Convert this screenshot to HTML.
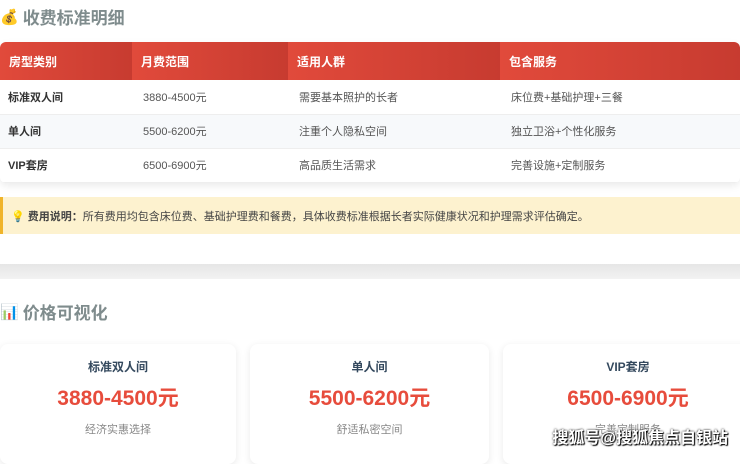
<!DOCTYPE html><html><head><meta charset="utf-8"><style>
*{margin:0;padding:0;box-sizing:border-box}
body{width:740px;height:452px;overflow:hidden;background:#fff;font-family:"Liberation Sans","Noto Sans CJK SC",sans-serif;position:relative}
.t{position:absolute;left:0;font-size:17px;font-weight:bold;color:#7f8c8d;display:flex;align-items:center;gap:4px}
table{position:absolute;top:42px;left:0;width:740px;border-collapse:collapse;box-shadow:0 3px 8px rgba(0,0,0,.08);border-radius:6px;overflow:hidden}
th{height:38px;text-align:left;padding-left:9px;color:#fff;font-size:12px;background:linear-gradient(90deg,#e14a3b,#c73b30)}
td{height:34px;padding-left:11px;font-size:11px;color:#555;border-bottom:1px solid #eee}
td:first-child{font-weight:bold;color:#333;padding-left:8px}
tr.a td{background:#f7f9fb}
.note{position:absolute;top:197px;left:0;width:740px;height:37px;background:#fdf2cf;border-left:3px solid #f0b429;font-size:11px;color:#444;padding:11px 0 0 8px}
.band{position:absolute;top:264px;left:0;width:740px;height:15px;background:linear-gradient(#e6e6e6,#f2f2f2)}
.c{position:absolute;top:344px;height:120px;background:#fff;border-radius:8px;box-shadow:0 2px 8px rgba(0,0,0,.09);text-align:center}
.c h4{margin-top:14px;font-size:12px;color:#34495e}
.c .p{margin-top:7px;font-size:21px;font-weight:bold;color:#e74c3c}
.c .s{margin-top:9px;font-size:11px;color:#888}
.wm{position:absolute;right:12px;top:424px;font-size:16px;color:#fff;font-weight:bold;text-shadow:0 0 2px #000,1px 1px 1px #000}
</style></head><body>
<div class="t" style="top:4px"><span style="font-size:15px">💰</span>收费标准明细</div>
<table>
<tr><th style="width:132px">房型类别</th><th style="width:156px">月费范围</th><th style="width:212px">适用人群</th><th>包含服务</th></tr>
<tr><td>标准双人间</td><td>3880-4500元</td><td>需要基本照护的长者</td><td>床位费+基础护理+三餐</td></tr>
<tr class="a"><td>单人间</td><td>5500-6200元</td><td>注重个人隐私空间</td><td>独立卫浴+个性化服务</td></tr>
<tr><td>VIP套房</td><td>6500-6900元</td><td>高品质生活需求</td><td>完善设施+定制服务</td></tr>
</table>
<div class="note">💡 <b>费用说明：</b>所有费用均包含床位费、基础护理费和餐费，具体收费标准根据长者实际健康状况和护理需求评估确定。</div>
<div class="band"></div>
<div class="t" style="top:299px"><span style="font-size:15px">📊</span>价格可视化</div>
<div class="c" style="left:0;width:236px"><h4>标准双人间</h4><div class="p">3880-4500元</div><div class="s">经济实惠选择</div></div>
<div class="c" style="left:250px;width:239px"><h4>单人间</h4><div class="p">5500-6200元</div><div class="s">舒适私密空间</div></div>
<div class="c" style="left:503px;width:250px"><h4>VIP套房</h4><div class="p">6500-6900元</div><div class="s">完善定制服务</div></div>
<div class="wm">搜狐号@搜狐焦点自银站</div>
</body></html>
